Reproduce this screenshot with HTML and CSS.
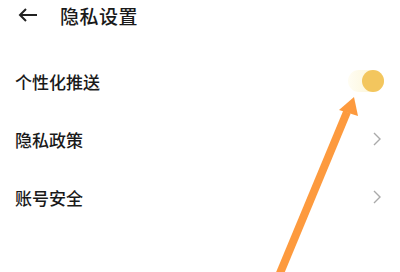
FILE: index.html
```html
<!DOCTYPE html>
<html lang="zh">
<head>
<meta charset="utf-8">
<link rel="stylesheet" href="styles.css">
</head>
<body>
<div class="page">
  <header class="header">
    <svg class="back" width="20" height="14" viewBox="0 0 20 14"><path d="M19 7H2M8 1L2 7l6 6" fill="none" stroke="#222" stroke-width="2"/></svg>
    <span class="title">隐私设置</span>
  </header>
  <div class="list">
    <div class="row">
      <span class="label">个性化推送</span>
      <span class="toggle"><span class="knob"></span></span>
    </div>
    <div class="row">
      <span class="label">隐私政策</span>
      <svg class="chev" width="8" height="14" viewBox="0 0 8 14"><path d="M1 1l6 6-6 6" fill="none" stroke="#aaa" stroke-width="1.4"/></svg>
    </div>
    <div class="row">
      <span class="label">账号安全</span>
      <svg class="chev" width="8" height="14" viewBox="0 0 8 14"><path d="M1 1l6 6-6 6" fill="none" stroke="#aaa" stroke-width="1.4"/></svg>
    </div>
  </div>
  <svg class="pointer" width="400" height="272" viewBox="0 0 400 272">
    <line x1="278" y1="278" x2="347" y2="112" stroke="#fd9a3e" stroke-width="8"/>
    <polygon points="354,97 339,110 358,116" fill="#fd9a3e"/>
  </svg>
</div>
</body>
</html>
```
FILE: styles.css
```css
html, body { margin: 0; padding: 0; background: #fff; }
.page {
  position: relative;
  width: 400px;
  height: 272px;
  overflow: hidden;
  font-family: "Noto Sans CJK SC", "Noto Sans", sans-serif;
  color: #1a1a1a;
}
.header {
  height: 30px;
  display: flex;
  align-items: center;
  padding-left: 18px;
}
.back { margin-right: 22px; }
.title { font-size: 19px; line-height: 1; font-weight: 500; letter-spacing: 0.5px; }
.list {
  margin-top: 22px;
  display: flex;
  flex-direction: column;
}
.row {
  height: 58px;
  display: flex;
  align-items: center;
  justify-content: space-between;
  padding: 0 18px 0 15px;
}
.label { font-size: 17px; line-height: 1; font-weight: 500; }
.toggle {
  width: 36px;
  height: 22px;
  border-radius: 11px;
  background: linear-gradient(90deg, #fffdf3, #fcf3cf);
  display: flex;
  justify-content: flex-end;
  margin-right: -2px;
}
.knob {
  width: 22px;
  height: 22px;
  border-radius: 50%;
  background: #f3c65e;
}
.chev { margin-right: 1px; }
.pointer { position: absolute; left: 0; top: 0; }
```
